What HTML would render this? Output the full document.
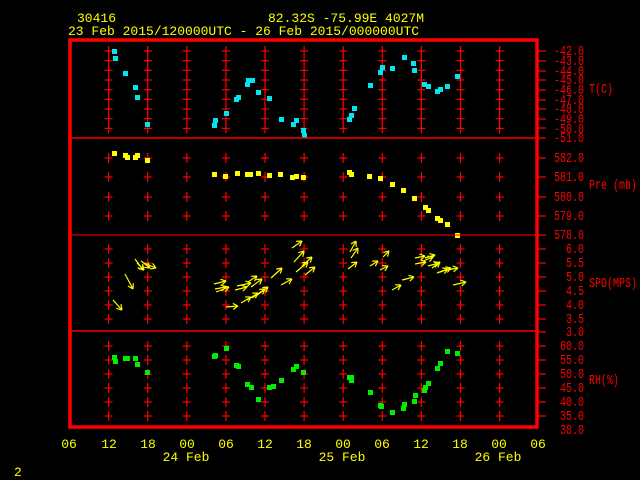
<!DOCTYPE html>
<html><head><meta charset="utf-8"><style>
html,body{margin:0;padding:0;background:#000;width:640px;height:480px;overflow:hidden}
svg{display:block}
text{font-family:"Liberation Mono",monospace;font-size:13px}
.y{fill:#ffff00}.r{fill:#ff0000}
.r text{font-size:13.5px}
</style></head><body>
<svg id="s" width="640" height="480" xmlns="http://www.w3.org/2000/svg">
<g id="g"></g>
<rect x="70" y="40" width="467" height="387" fill="none" stroke="#f00" stroke-width="3.5"/>
<line x1="70" y1="138" x2="537" y2="138" stroke="#f00" stroke-width="1.5"/>
<line x1="70" y1="235" x2="537" y2="235" stroke="#f00" stroke-width="1"/>
<line x1="70" y1="331" x2="537" y2="331" stroke="#f00" stroke-width="1.5"/>
<text class="y" x="77" y="22">30416</text>
<text class="y" x="268" y="22">82.32S  -75.99E  4027M</text>
<text class="y" x="68" y="35">23 Feb 2015/120000UTC - 26 Feb 2015/000000UTC</text>
<g class="r" transform="matrix(0.74,0,0,1,584,0)">
<g text-anchor="end">
<text x="0" y="55">-42.0</text><text x="0" y="65">-43.0</text><text x="0" y="75">-44.0</text><text x="0" y="84">-45.0</text><text x="0" y="94">-46.0</text><text x="0" y="104">-47.0</text><text x="0" y="113">-48.0</text><text x="0" y="123">-49.0</text><text x="0" y="133">-50.0</text><text x="0" y="142">-51.0</text>
<text x="0" y="162">582.0</text><text x="0" y="181">581.0</text><text x="0" y="201">580.0</text><text x="0" y="220">579.0</text><text x="0" y="239">578.0</text>
<text x="0" y="253">6.0</text><text x="0" y="267">5.5</text><text x="0" y="281">5.0</text><text x="0" y="295">4.5</text><text x="0" y="309">4.0</text><text x="0" y="323">3.5</text><text x="0" y="336">3.0</text>
<text x="0" y="350">60.0</text><text x="0" y="364">55.0</text><text x="0" y="378">50.0</text><text x="0" y="392">45.0</text><text x="0" y="406">40.0</text><text x="0" y="420">35.0</text><text x="0" y="434">30.0</text>
</g>
<text x="6.8" y="93">T(C)</text><text x="6.8" y="189">Pre (mb)</text><text x="6.8" y="287">SPD(MPS)</text><text x="6.8" y="384">RH(%)</text>
</g>
<g class="y" text-anchor="middle">
<text x="69" y="448">06</text><text x="109" y="448">12</text><text x="148" y="448">18</text><text x="187" y="448">00</text><text x="226" y="448">06</text><text x="265" y="448">12</text><text x="304" y="448">18</text><text x="343" y="448">00</text><text x="382" y="448">06</text><text x="421" y="448">12</text><text x="460" y="448">18</text><text x="499" y="448">00</text><text x="538" y="448">06</text>
<text x="186" y="461">24 Feb</text><text x="342" y="461">25 Feb</text><text x="498" y="461">26 Feb</text>
</g>
<text class="y" x="14" y="476">2</text>
</svg>
<script>
var g=document.getElementById('g'),h='';
function L(a,b,c,d,col,w){h+='<line x1="'+a+'" y1="'+b+'" x2="'+c+'" y2="'+d+'" stroke="'+col+'" stroke-width="'+(w||1.2)+'"/>';}
var ys=[];for(var k=0;k<9;k++)ys.push(51+9.67*k);
ys=ys.concat([158,177,197,216,249,263,277,291,305,319,346,360,374,388,402,416]);
for(var i=0;i<11;i++){var x=108.6+39.1*i;ys.forEach(function(y){L(x,y-5,x,y+5,'#f00');L(x-4,y,x+4,y,'#f00');});}
[51,61,71,80,90,100,109,119,128,138,158,177,197,216,235,249,263,277,291,305,319,332,346,360,374,388,402,416].forEach(function(y){L(537,y,546,y,'#f00');});
function P(a,c){a.forEach(function(p){h+='<rect x="'+(p[0]-2)+'" y="'+(p[1]-2)+'" width="5" height="5" fill="'+c+'"/>';});}
P([[114,51],[115,58],[125,73],[135,87],[137,97],[147,124],[214,125],[215,120],[226,113],[236,99],[238,97],[247,84],[248,80],[252,80],[258,92],[269,98],[281,119],[293,124],[296,120],[303,130],[304,135],[349,119],[351,115],[354,108],[370,85],[380,72],[382,67],[392,68],[404,57],[413,63],[414,70],[424,84],[428,86],[437,91],[440,89],[447,86],[457,76]],'#00e5ee');
P([[114,153],[125,155],[127,157],[135,157],[137,155],[147,160],[214,174],[225,176],[237,173],[247,174],[250,174],[258,173],[269,175],[280,174],[292,177],[296,176],[303,177],[349,172],[351,174],[369,176],[380,178],[392,184],[403,190],[414,198],[425,207],[428,210],[437,218],[440,220],[447,224],[457,235]],'#ffff00');
P([[114,357],[115,361],[125,358],[127,358],[135,358],[137,364],[147,372],[214,356],[215,355],[226,348],[236,365],[238,366],[247,384],[251,387],[258,399],[269,387],[273,386],[281,380],[293,369],[296,366],[303,372],[349,377],[351,377],[351,380],[370,392],[380,405],[381,406],[392,412],[403,408],[404,404],[414,401],[415,395],[424,390],[425,387],[428,383],[437,368],[440,363],[447,351],[457,353]],'#00ee00');
var A=[[113,300,122,310],[125,274,133,289],[135,259,143,270],[137,263,144,270],[141,261,150,268],[144,263,156,268],[216,292,229,287],[214,284,226,281],[215,289,226,287],[235,290,247,287],[237,286,251,283],[241,303,251,297],[247,300,258,293],[252,298,265,289],[256,296,268,287],[248,282,257,276],[251,287,262,279],[271,278,282,268],[281,285,292,279],[292,248,302,241],[294,262,304,251],[296,272,308,262],[305,275,315,267],[302,266,312,257],[226,307,238,306],[350,252,356,241],[351,258,358,248],[348,269,357,262],[370,266,378,261],[380,270,388,266],[383,257,389,251],[392,290,401,285],[402,280,414,277],[415,258,425,256],[415,264,426,262],[425,258,435,255],[428,266,439,263],[437,273,448,269],[440,272,451,268],[447,270,458,268],[453,285,466,282],[423,261,433,257],[432,268,440,262]];
A.forEach(function(a){var dx=a[2]-a[0],dy=a[3]-a[1],l=Math.hypot(dx,dy),ux=dx/l,uy=dy/l;L(a[0],a[1],a[2],a[3],'#ff0',1.2);
var hx=a[2]-ux*5,hy=a[3]-uy*5;L(a[2],a[3],hx-uy*3,hy+ux*3,'#ff0',1.2);L(a[2],a[3],hx+uy*3,hy-ux*3,'#ff0',1.2);});
g.innerHTML=h;
</script>
</body></html>
